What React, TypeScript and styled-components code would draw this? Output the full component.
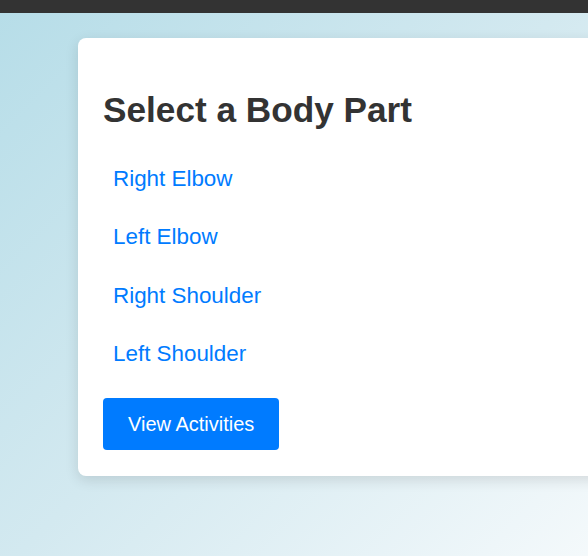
import React, { useState } from "react";
import styled, { createGlobalStyle } from "styled-components";

const GlobalStyle = createGlobalStyle`
  html, body {
    margin: 0;
    padding: 0;
    height: 100%;
    overflow: hidden;
  }
  body {
    font-family: "Liberation Sans", Arial, sans-serif;
  }
`;

const Page = styled.div`
  min-height: 100vh;
  background: linear-gradient(135deg, #b6dde8 0%, #d3e9f0 50%, #f4f9fb 100%);
  display: flex;
  flex-direction: column;
`;

const TopBar = styled.div`
  height: 13px;
  background: #333333;
  flex-shrink: 0;
`;

const Main = styled.main`
  padding: 25px 0 0 78px;
`;

const Card = styled.section`
  width: 600px;
  box-sizing: border-box;
  background: #ffffff;
  border-radius: 8px;
  box-shadow: 0 4px 14px rgba(0, 0, 0, 0.12);
  padding: 25px 25px 26px;
`;

const Title = styled.h1`
  margin: 27px 0 26px;
  font-size: 35.2px;
  line-height: 40px;
  font-weight: 700;
  color: #333333;
`;

const List = styled.ul`
  list-style: none;
  margin: 0 0 22px;
  padding: 0;
  display: flex;
  flex-direction: column;
  gap: 13.33px;
`;

const PartLink = styled.a<{ $active?: boolean }>`
  display: inline-block;
  padding: 10px 10px;
  font-size: 22.4px;
  line-height: 25px;
  color: #007bff;
  text-decoration: none;
  cursor: pointer;
  border-radius: 4px;
  background: ${(p) => (p.$active ? "#e7f1ff" : "transparent")};
`;

const ActionButton = styled.button`
  display: block;
  border: none;
  border-radius: 4px;
  background: #007bff;
  color: #ffffff;
  font-family: "Liberation Sans", Arial, sans-serif;
  font-size: 20px;
  line-height: 22px;
  padding: 15px 25px;
  height: 52px;
  cursor: pointer;
`;

const parts = ["Right Elbow", "Left Elbow", "Right Shoulder", "Left Shoulder"];

export default function App() {
  const [selected, setSelected] = useState<string | null>(null);
  return (
    <>
      <GlobalStyle />
      <Page>
        <TopBar />
        <Main>
          <Card>
            <Title>Select a Body Part</Title>
            <List>
              {parts.map((p) => (
                <li key={p}>
                  <PartLink $active={selected === p} onClick={() => setSelected(p)}>
                    {p}
                  </PartLink>
                </li>
              ))}
            </List>
            <ActionButton>View Activities</ActionButton>
          </Card>
        </Main>
      </Page>
    </>
  );
}
